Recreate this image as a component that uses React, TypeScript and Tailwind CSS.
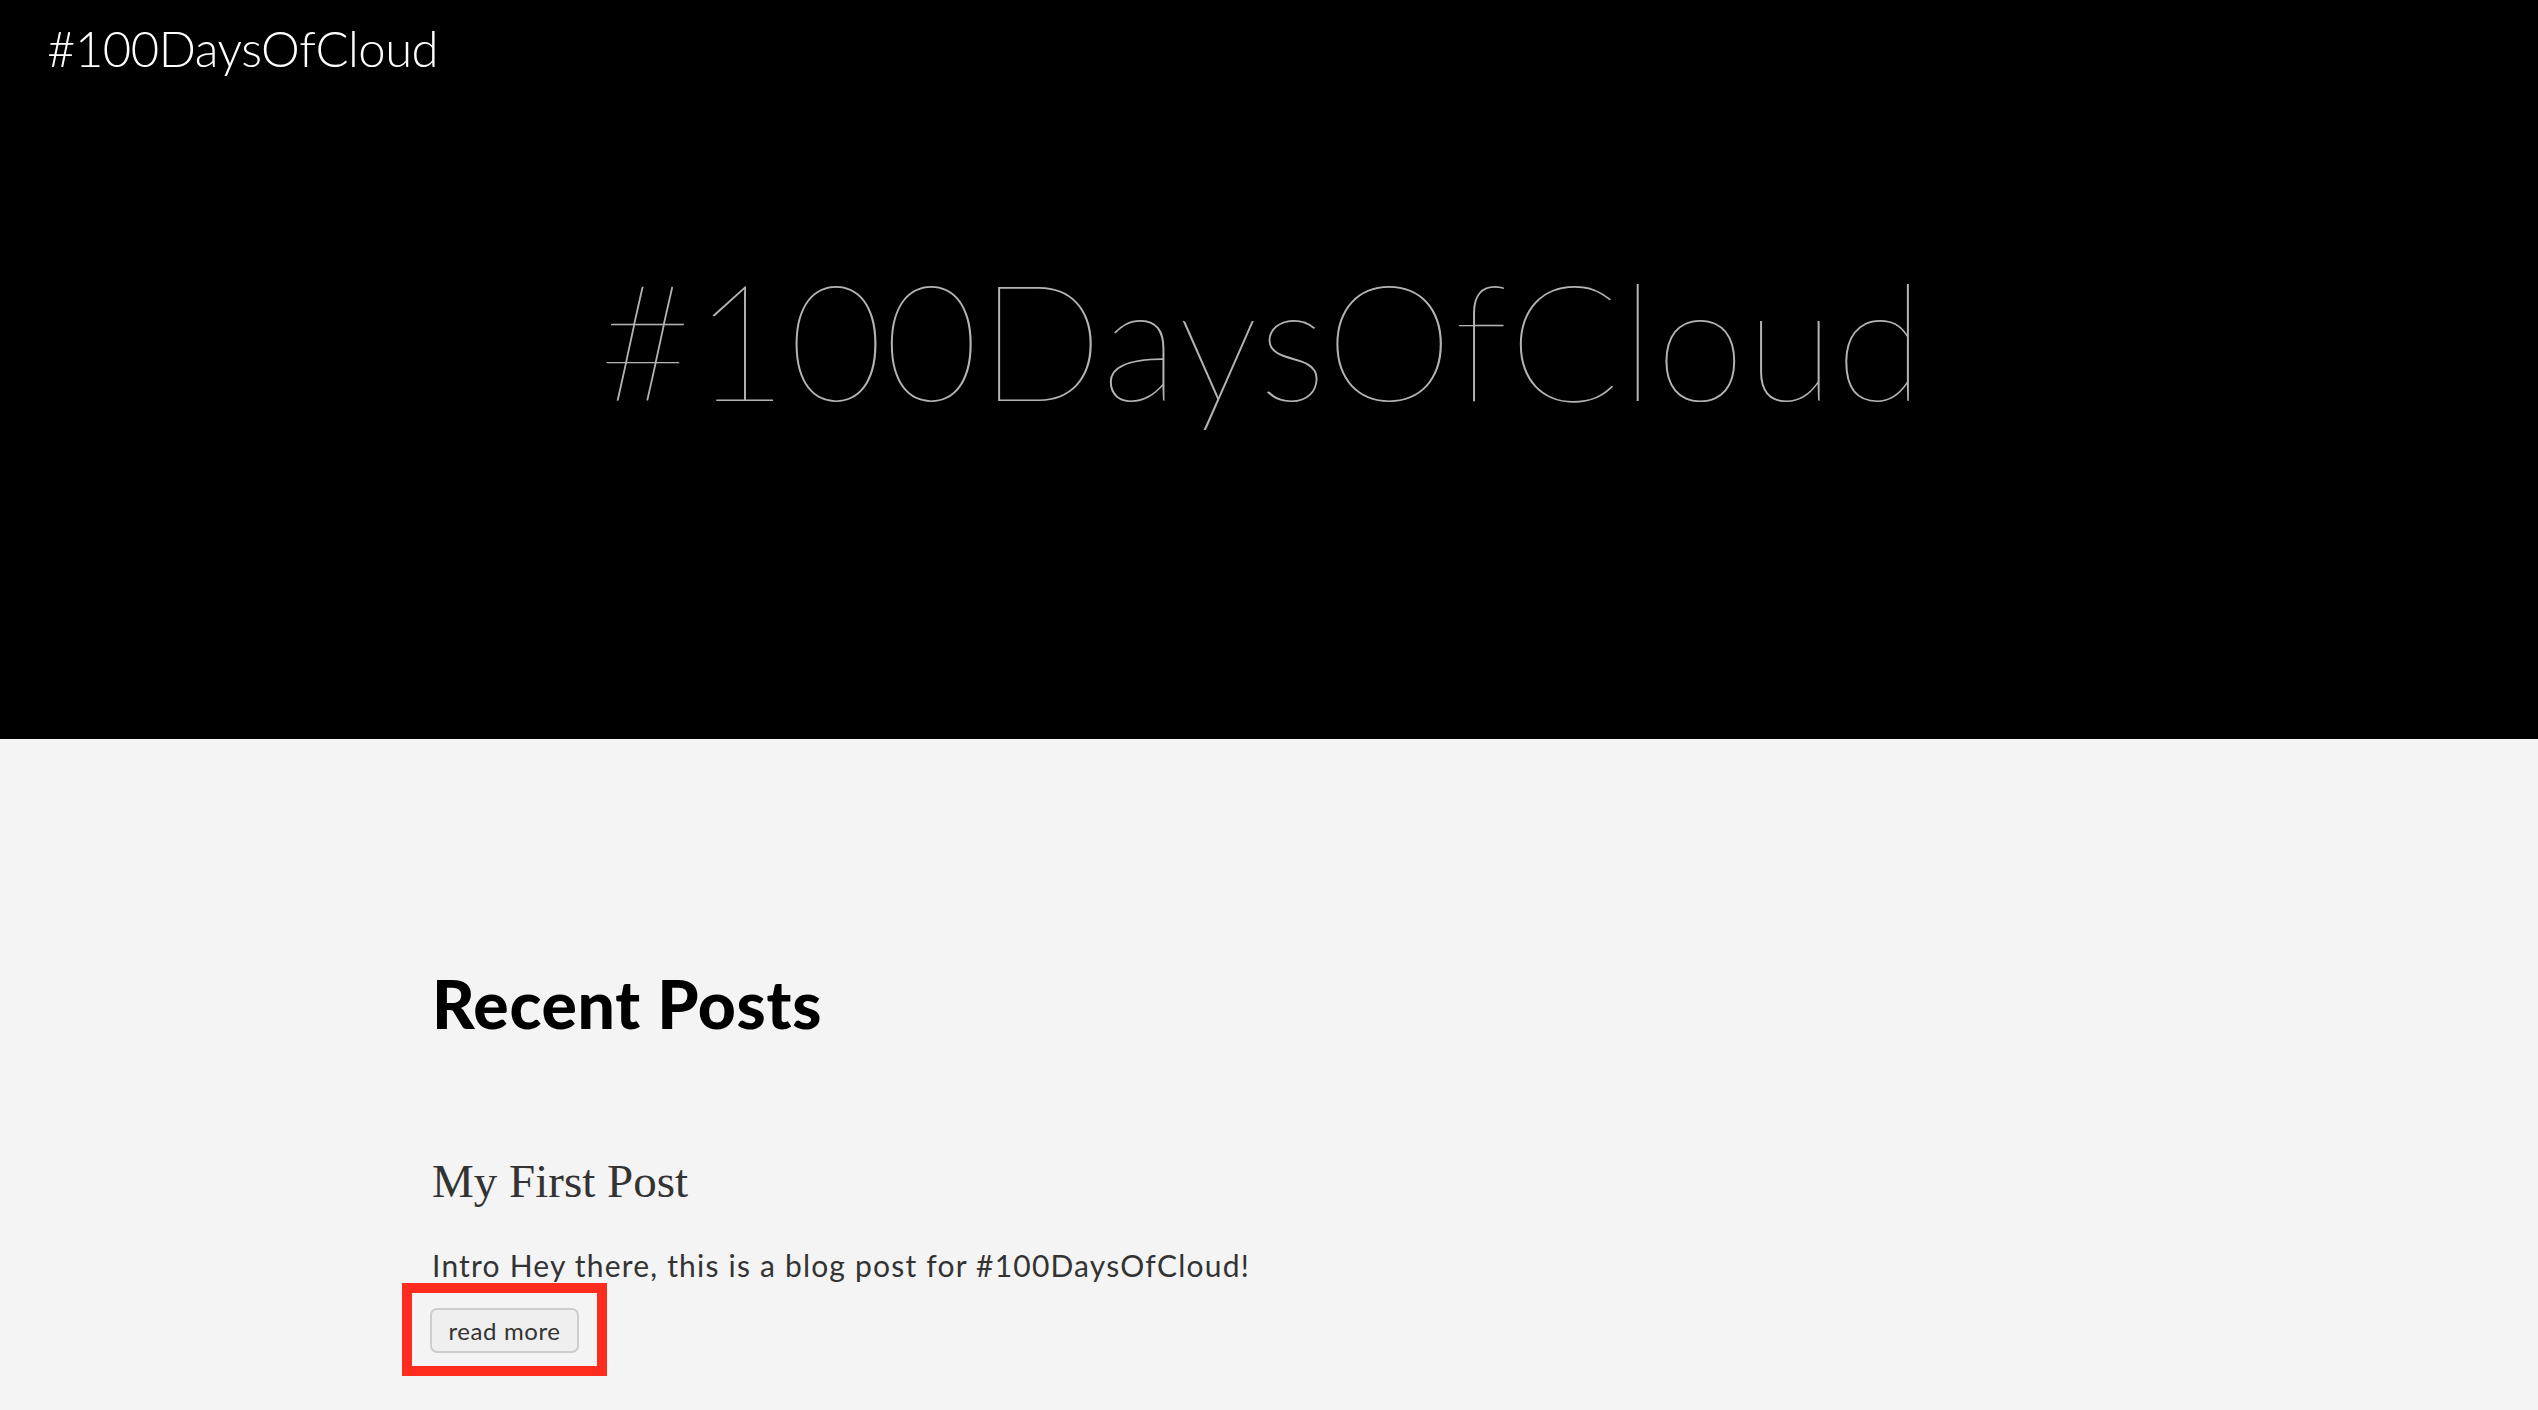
export default function App() {
  return (
    <div className="min-h-screen bg-[#f4f4f4] font-['Lato',sans-serif]">
      {/* Hero */}
      <header className="h-[739px] bg-black flex flex-col">
        <div className="pl-[47px] pt-[24px] text-[49px] leading-none font-light tracking-[-0.5px] text-white">
          #100DaysOfCloud
        </div>
        <h1 className="pl-[598px] mt-[184px] text-[163px] leading-none font-thin tracking-[0.8px] text-[#b4b4b4] whitespace-nowrap">
          #100DaysOfCloud
        </h1>
      </header>

      {/* Posts */}
      <main className="pl-[432px] flex flex-col items-start">
        <h2 className="mt-[232px] text-[66px] leading-none font-black tracking-[0.7px] text-black">Recent Posts</h2>
        <h3 className="mt-[121px] text-[47px] leading-none font-['Liberation_Serif',serif] text-[#333]">
          My First Post
        </h3>
        <p className="mt-[45px] text-[30px] leading-none tracking-[1.2px] text-[#333]">
          Intro Hey there, this is a blog post for #100DaysOfCloud!
        </p>
        <div className="mt-[3px] -ml-[30px] border-[10px] border-[#fe2b1f] pl-[18px] pr-[18px] pt-[15px] pb-[13px]">
          <button className="h-[45px] w-[149px] rounded-[7px] border-2 border-[#cdcdcd] bg-[#efefef] text-[24px] leading-none tracking-[0.6px] text-[#333]">
            read more
          </button>
        </div>
      </main>
    </div>
  );
}
